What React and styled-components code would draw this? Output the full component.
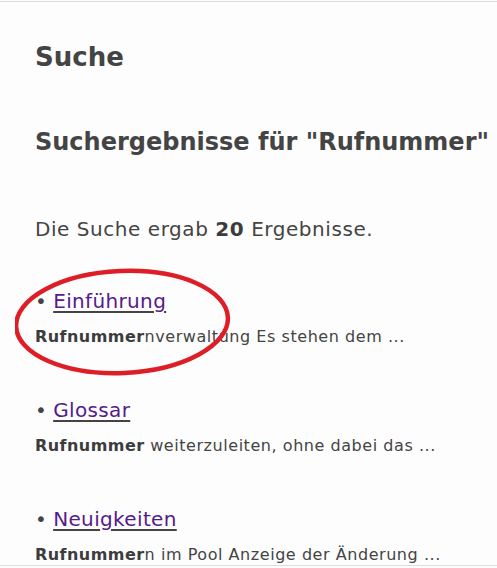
import React from "react";
import styled, { createGlobalStyle } from "styled-components";

const GlobalStyle = createGlobalStyle`
  html, body {
    margin: 0;
    padding: 0;
    background: #fdfdfd;
  }
  body {
    font-family: "DejaVu Sans", Verdana, sans-serif;
    color: #444;
  }
`;

const Page = styled.div`
  position: relative;
  margin-top: 1px;
  height: 565px;
  border-top: 1px solid #dedede;
  border-bottom: 1px solid #dedede;
  box-sizing: border-box;
  padding: 39px 0 0 35px;
  overflow: hidden;
`;

const Title = styled.h1`
  margin: 0;
  font-size: 26px;
  line-height: 32px;
  font-weight: bold;
  color: #444;
`;

const SubTitle = styled.h2`
  margin: 54px 0 0;
  font-size: 24px;
  line-height: 30px;
  font-weight: bold;
  color: #444;
  white-space: nowrap;
`;

const Summary = styled.p`
  margin: 59px 0 0;
  font-size: 20px;
  line-height: 26px;
  letter-spacing: 0.55px;

  b {
    color: #3c3c3c;
  }
`;

const Results = styled.ul`
  list-style: none;
  margin: 46px 0 0;
  padding: 0;
`;

const Result = styled.li`
  position: relative;
  margin-bottom: 50px;
`;

const ResultTitle = styled.div`
  font-size: 20px;
  line-height: 26px;
  white-space: nowrap;
`;

const Link = styled.a`
  color: #551a8b;
  letter-spacing: 0.35px;
  text-decoration: underline;
  text-decoration-color: #444;
  text-underline-offset: 3px;
`;

const Snippet = styled.p`
  margin: 13px 0 0;
  font-size: 16px;
  line-height: 20px;
  letter-spacing: 0.55px;
  white-space: nowrap;

  b {
    color: #3c3c3c;
    letter-spacing: 0.45px;
  }
`;

const Circle = styled.svg`
  position: absolute;
  left: -20px;
  top: -22px;
  pointer-events: none;
`;

const results = [
  { title: "Einführung", hit: "Rufnummer", rest: "nverwaltung Es stehen dem ...", marked: true },
  { title: "Glossar", hit: "Rufnummer", rest: " weiterzuleiten, ohne dabei das ..." },
  { title: "Neuigkeiten", hit: "Rufnummer", rest: "n im Pool Anzeige der Änderung ..." },
];

export default function App() {
  return (
    <>
      <GlobalStyle />
      <Page>
        <Title>Suche</Title>
        <SubTitle>Suchergebnisse für "Rufnummer"</SubTitle>
        <Summary>
          Die Suche ergab <b>20</b> Ergebnisse.
        </Summary>
        <Results>
          {results.map((r) => (
            <Result key={r.title}>
              <ResultTitle>
                • <Link href="#">{r.title}</Link>
              </ResultTitle>
              <Snippet>
                <b>{r.hit}</b>
                {r.rest}
              </Snippet>
              {r.marked && (
                <Circle width="224" height="116" viewBox="0 0 224 116">
                  <ellipse
                    cx="107"
                    cy="56"
                    rx="106"
                    ry="51"
                    fill="none"
                    stroke="#de1e27"
                    strokeWidth="4.5"
                    transform="rotate(-2.5 107 56)"
                  />
                </Circle>
              )}
            </Result>
          ))}
        </Results>
      </Page>
    </>
  );
}
